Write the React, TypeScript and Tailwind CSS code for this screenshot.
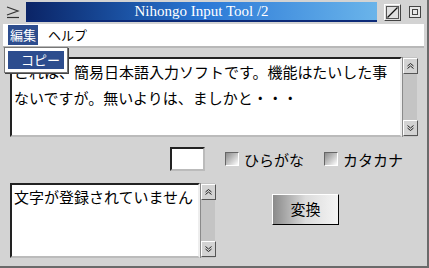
import React from 'react';

const jp = { fontFamily: '"Noto Sans CJK JP", "Noto Sans", sans-serif' };

const Arrow = ({ up }: { up?: boolean }) => (
  <div className="h-[16px] w-[15px] border border-t-white border-l-white border-b-[#555] border-r-[#555] bg-[#d3d3d3] flex items-center justify-center">
    <svg width="7" height="6" viewBox="0 0 7 6" className={up ? '' : 'rotate-180'}>
      <polyline points="0.5,3 3.5,0.5 6.5,3" fill="none" stroke="#222" strokeWidth="1" />
      <polyline points="0.5,5.5 3.5,3 6.5,5.5" fill="none" stroke="#222" strokeWidth="1" />
    </svg>
  </div>
);

const ScrollBar = () => (
  <div className="w-[15px] flex flex-col justify-between bg-[#c4c4c4] border-l border-l-[#8a8a8a] py-[1px]">
    <Arrow up />
    <Arrow />
  </div>
);

const CheckBox = ({ label }: { label: string }) => (
  <div className="flex items-center gap-[5px]">
    <div className="w-[14px] h-[14px] border border-t-[#666] border-l-[#666] border-b-white border-r-white bg-gradient-to-br from-[#8c8c8c] to-white" />
    <span className="text-[15px] text-black leading-none">{label}</span>
  </div>
);

export default function App() {
  return (
    <div className="w-[429px] h-[268px] bg-[#d3d3d3] flex flex-col overflow-hidden border-r-2 border-b-2 border-r-[#6a6a6a] border-b-[#6a6a6a]" style={jp}>
      {/* title bar */}
      <div className="h-[24px] flex items-center pl-[4px] pr-[6px] gap-[3px]">
        <div className="w-[19px] h-[19px] flex items-center justify-center">
          <svg width="15" height="14" viewBox="0 0 15 14">
            <polyline points="1,2 12,6 1,10" fill="none" stroke="#333" strokeWidth="1.2" />
            <line x1="1" y1="12.5" x2="13" y2="12.5" stroke="#333" strokeWidth="1.2" />
          </svg>
        </div>
        <div className="h-[20px] w-[356px] bg-gradient-to-r from-[#0b2466] via-[#2a78d6] to-[#6ab4ea] border-b-2 border-b-[#0c2a78] flex items-center justify-center">
          <span className="text-white text-[15px] leading-none" style={{ fontFamily: '"Liberation Serif", "DejaVu Serif", serif' }}>
            Nihongo Input Tool /2
          </span>
        </div>
        <div className="ml-[4px] w-[17px] h-[17px] border border-t-white border-l-white border-b-[#444] border-r-[#444] bg-[#e0e0e0] flex items-center justify-center">
          <svg width="13" height="13" viewBox="0 0 13 13">
            <rect x="0.5" y="0.5" width="12" height="12" fill="none" stroke="#555" />
            <line x1="1.5" y1="11.5" x2="11.5" y2="1.5" stroke="#111" strokeWidth="1.3" />
          </svg>
        </div>
        <div className="ml-[5px] w-[12px] h-[12px] border border-[#444] bg-[#e6e6e6] flex items-center justify-center">
          <div className="w-[6px] h-[6px] border border-[#444]" />
        </div>
      </div>

      {/* menu bar */}
      <div className="relative mx-[3px] h-[24px] bg-white border-b-2 border-b-[#b8b8b8] flex items-center pl-[5px] gap-[10px]">
        <div className="h-[20px] px-[2px] bg-[#2d4d8e] text-white text-[13px] flex items-center">編集</div>
        <div className="text-[13px] text-black">ヘルプ</div>
        <div className="absolute left-[1px] top-[23px] w-[64px] h-[26px] bg-white border border-[#777] p-[3px] z-10 shadow-[1px_1px_0_#444]">
          <div className="h-full bg-[#2d4d8e] text-white text-[13px] flex items-center pl-[13px]">コピー</div>
        </div>
      </div>

      {/* content */}
      <div className="flex flex-col px-[10px] pt-[9px]">
        <div className="flex h-[80px]">
          <div className="flex-1 bg-white border-2 border-t-[#222] border-l-[#222] border-b-[#bbb] border-r-[#eee] px-[2px] text-[15px] leading-[26px] text-black">
            <div>これは、簡易日本語入力ソフトです。機能はたいした事</div>
            <div>ないですが。無いよりは、ましかと・・・</div>
          </div>
          <ScrollBar />
        </div>

        <div className="flex items-center justify-end h-[24px] mt-[10px] pr-[14px]">
          <div className="w-[35px] h-[24px] bg-white border-2 border-t-[#222] border-l-[#222] border-b-[#bbb] border-r-[#bbb]" />
          <div className="ml-[20px]">
            <CheckBox label="ひらがな" />
          </div>
          <div className="ml-[20px]">
            <CheckBox label="カタカナ" />
          </div>
        </div>

        <div className="flex mt-[12px] h-[75px]">
          <div className="w-[190px] bg-white border-2 border-t-[#222] border-l-[#222] border-b-[#bbb] border-r-[#eee] px-[2px] text-[15px] leading-[24px] text-black">
            文字が登録されていません
          </div>
          <ScrollBar />
          <div className="ml-[57px] mt-[11px]">
            <div className="w-[67px] h-[31px] border border-t-white border-l-white border-b-black border-r-black bg-gradient-to-r from-[#8a8a8a] via-[#dcdcdc] to-[#f4f4f4] flex items-center justify-center text-[15px] text-black">
              変換
            </div>
          </div>
        </div>
      </div>
    </div>
  );
}
